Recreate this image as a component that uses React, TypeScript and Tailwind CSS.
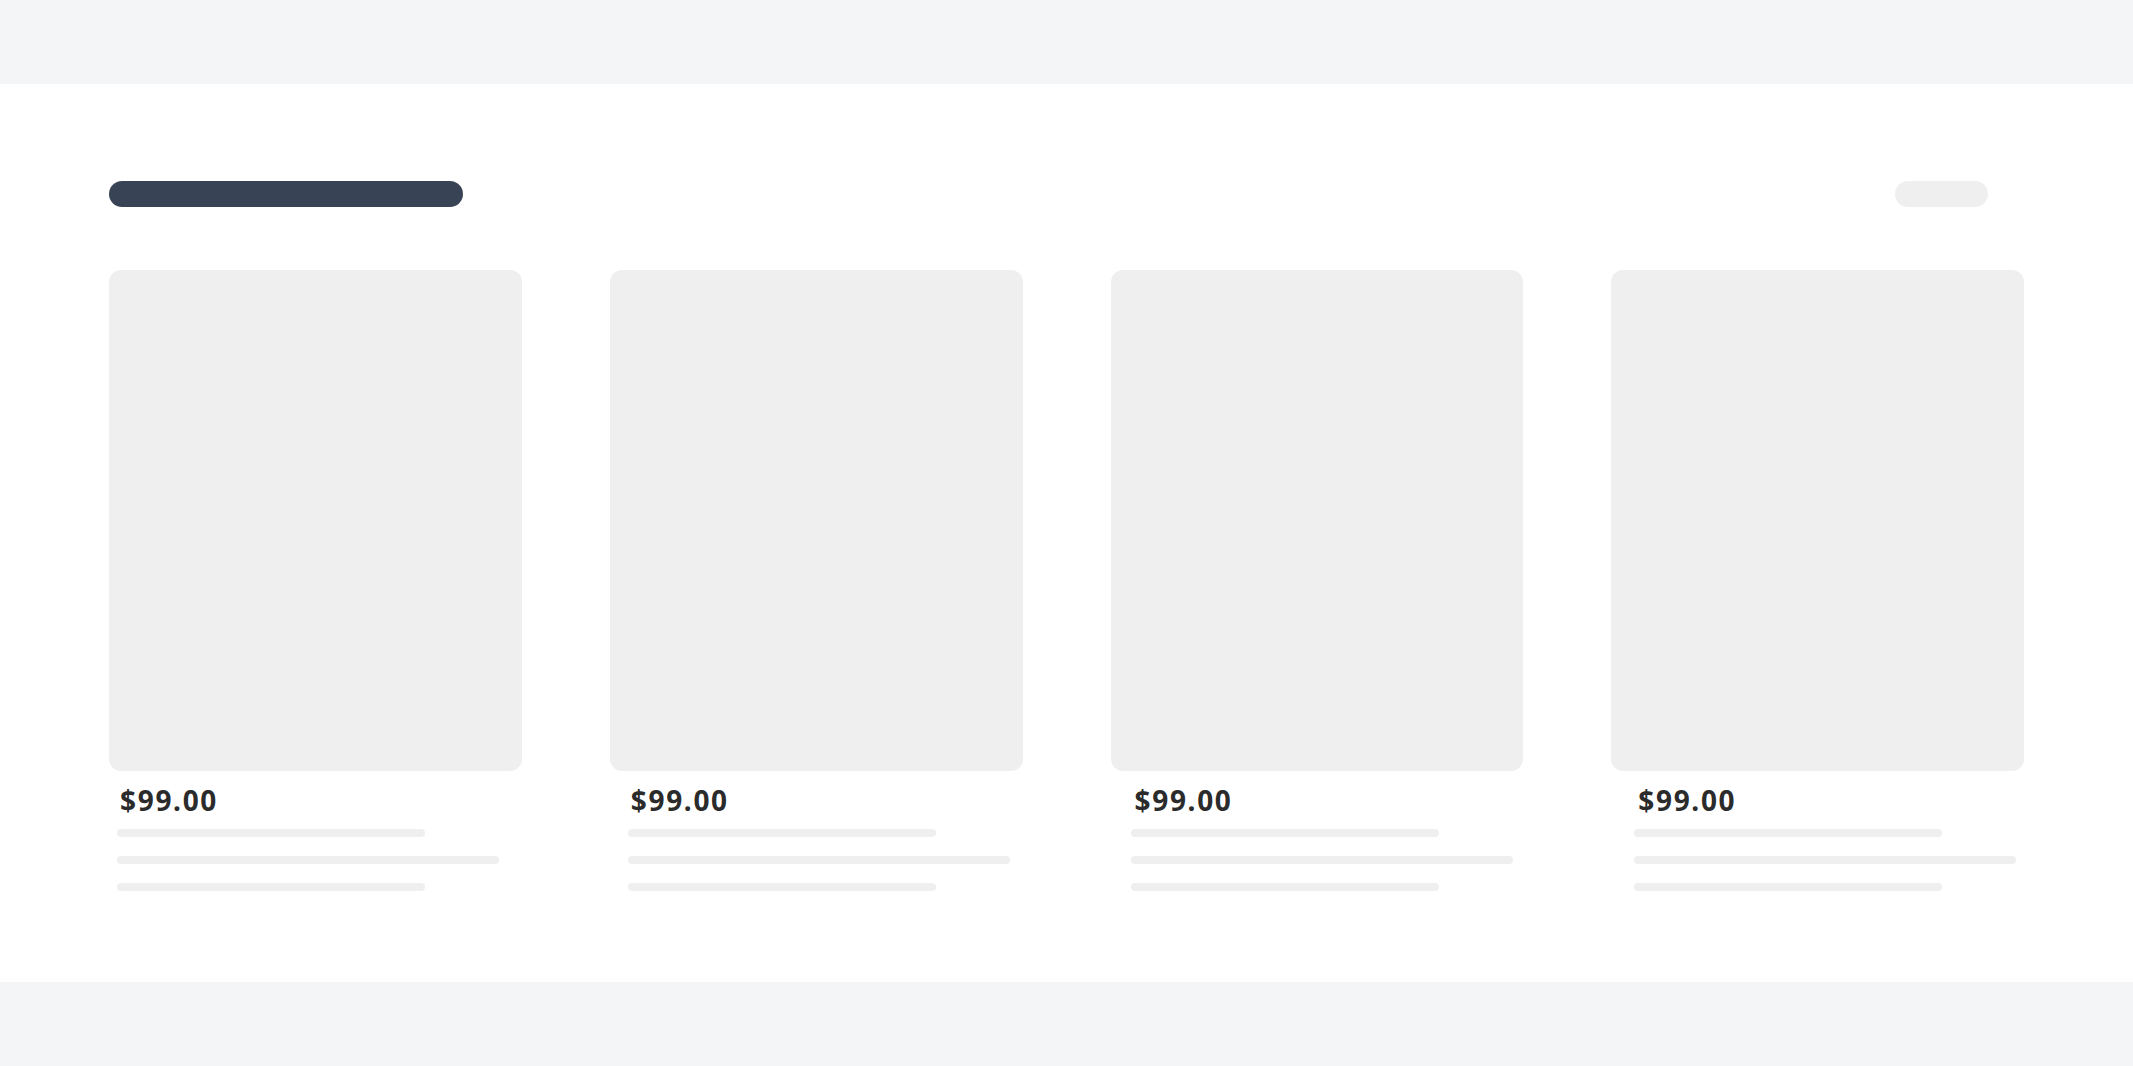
import React from "react";

const cards = [
  { pad: "pl-[8px]", pricePad: "pl-[3px]" },
  { pad: "pl-[18px]", pricePad: "pl-[3px]" },
  { pad: "pl-[20px]", pricePad: "pl-[4px]" },
  { pad: "pl-[23px]", pricePad: "pl-[4px]" },
];

export default function App() {
  return (
    <div className="flex min-h-screen flex-col bg-white" style={{ fontFamily: '"Noto Sans", "Open Sans", sans-serif' }}>
      <header className="h-[84px] shrink-0 bg-[#f4f5f7]" />
      <main className="flex-1 px-[109px] pt-[97px] pb-[91px]">
        <div className="flex items-center justify-between">
          <div className="h-[26px] w-[354px] rounded-full bg-[#394356]" />
          <div className="mr-[36px] h-[26px] w-[93px] rounded-full bg-[#efefef]" />
        </div>
        <div className="mt-[63px] grid grid-cols-4 gap-[88px]">
          {cards.map((c, i) => (
            <div key={i} className="flex flex-col">
              <div className="h-[501px] rounded-[12px] bg-[#efefef]" />
              <div className={`mt-[16px] flex flex-col ${c.pad}`}>
                <div className={`${c.pricePad} text-[28px] font-bold leading-[26px] tracking-[0.06em] text-[#2b2b2b]`}>$99.00</div>
                <div className="mt-[16px] flex flex-col gap-[19px]">
                  <div className="h-[8px] w-[308px] rounded-full bg-[#efefef]" />
                  <div className="h-[8px] w-[382px] rounded-full bg-[#efefef]" />
                  <div className="h-[8px] w-[308px] rounded-full bg-[#efefef]" />
                </div>
              </div>
            </div>
          ))}
        </div>
      </main>
      <footer className="h-[84px] shrink-0 bg-[#f4f5f7]" />
    </div>
  );
}
